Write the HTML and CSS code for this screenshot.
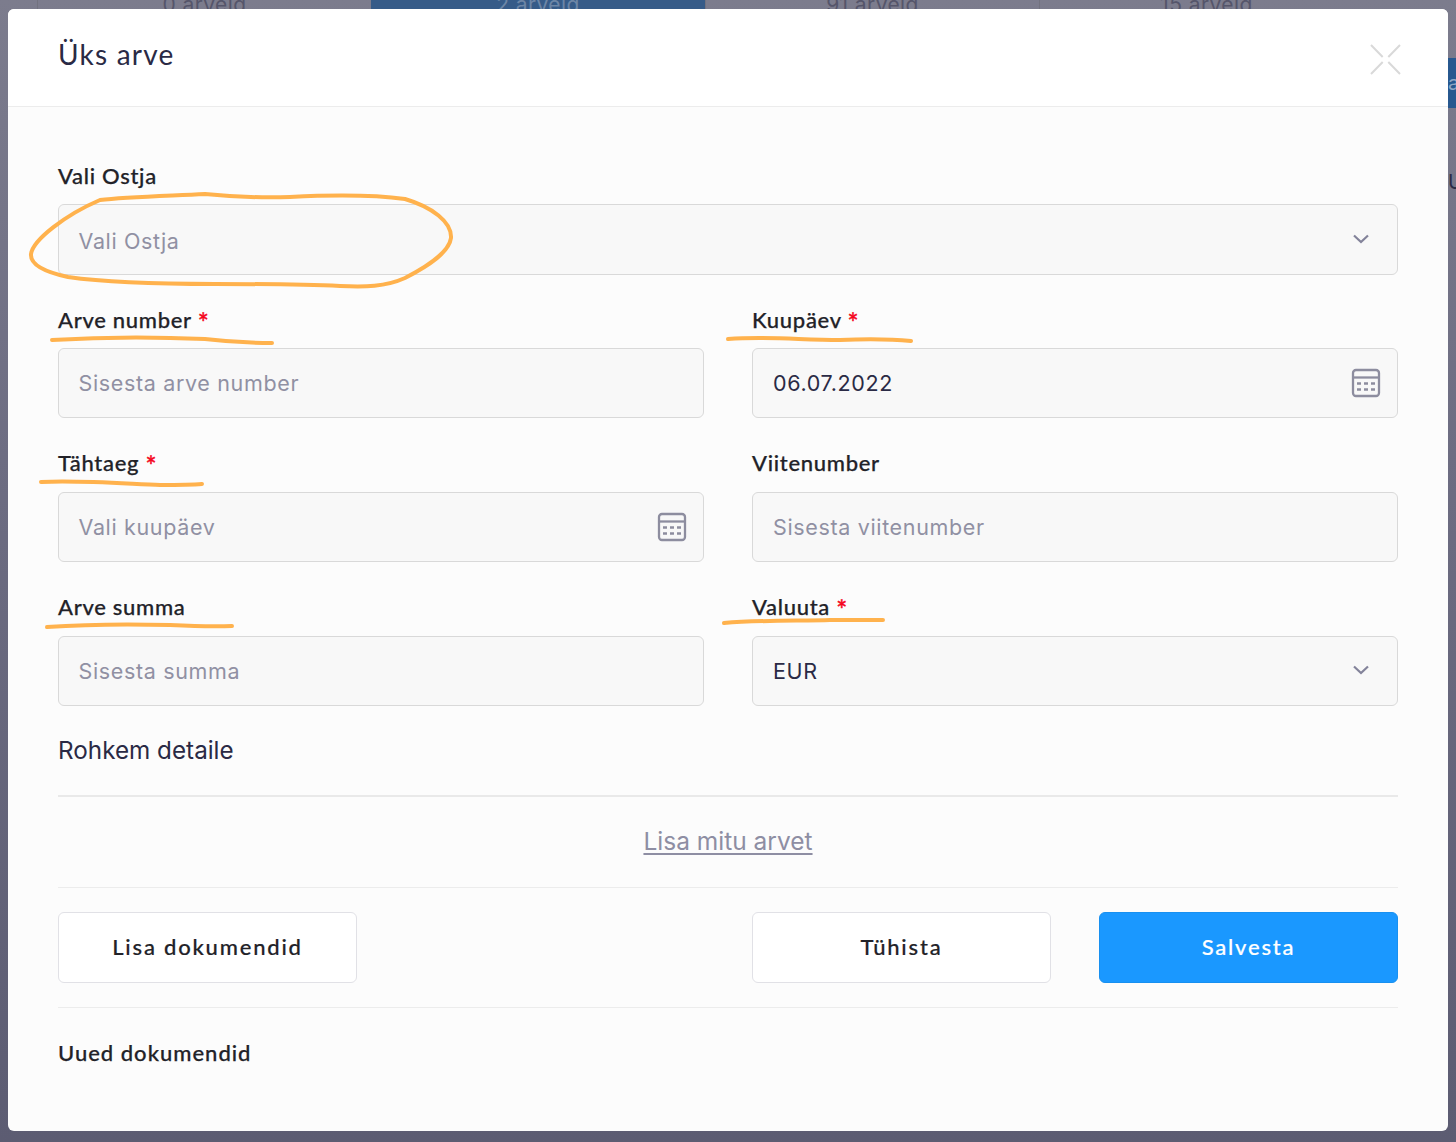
FILE: index.html
```html
<!DOCTYPE html>
<html lang="et">
<head>
<meta charset="utf-8">
<title>Üks arve</title>
<link rel="stylesheet" href="styles.css">
</head>
<body>
<div class="backdrop">
  <div class="bg-tabs">
    <div class="bg-tab bg-t1">0 arveid</div>
    <div class="bg-tab bg-t2">2 arveid</div>
    <div class="bg-tab bg-t3">91 arveid</div>
    <div class="bg-tab bg-t4">15 arveid</div>
  </div>
  <div class="bg-side">a</div>
  <div class="bg-letter">U</div>
</div>
<main class="modal">
  <header class="modal-head">
    <h1 class="modal-title">Üks arve</h1>
    <button class="close" aria-label="Sulge">
      <svg width="32" height="32" viewBox="0 0 32 32" fill="none" stroke="#d9d9d9" stroke-width="2">
        <path d="M2 2 L13.7 14 M31 2 L19.3 14 M2 31 L13.7 19 M31 31 L19.3 19"/>
      </svg>
    </button>
  </header>
  <form class="modal-body">
    <div class="field first">
      <div class="label">Vali Ostja</div>
      <div class="input tall placeholder"><span>Vali Ostja</span>
        <svg class="chev" width="16" height="10" viewBox="0 0 16 10" fill="none" stroke="#83839a" stroke-width="2.2"><path d="M1 1.5 L8 8 L15 1.5"/></svg>
      </div>
    </div>
    <div class="grid">
      <div class="field">
        <div class="label">Arve number <i>*</i></div>
        <div class="input placeholder"><span>Sisesta arve number</span></div>
      </div>
      <div class="field">
        <div class="label">Kuupäev <i>*</i></div>
        <div class="input value"><span>06.07.2022</span>
          <svg class="cal" width="30" height="30" viewBox="0 0 30 30" fill="none" stroke="#8d8d9f" stroke-width="2.3"><rect x="2" y="2" width="26" height="26" rx="3"/><path d="M2 9.5 H28"/><path stroke-width="2.4" d="M6 15.5h4M13 15.5h4M20 15.5h4M6 21.5h4M13 21.5h4M20 21.5h4"/></svg>
        </div>
      </div>
      <div class="field">
        <div class="label">Tähtaeg <i>*</i></div>
        <div class="input placeholder"><span>Vali kuupäev</span>
          <svg class="cal" width="30" height="30" viewBox="0 0 30 30" fill="none" stroke="#8d8d9f" stroke-width="2.3"><rect x="2" y="2" width="26" height="26" rx="3"/><path d="M2 9.5 H28"/><path stroke-width="2.4" d="M6 15.5h4M13 15.5h4M20 15.5h4M6 21.5h4M13 21.5h4M20 21.5h4"/></svg>
        </div>
      </div>
      <div class="field">
        <div class="label">Viitenumber</div>
        <div class="input placeholder"><span>Sisesta viitenumber</span></div>
      </div>
      <div class="field">
        <div class="label">Arve summa</div>
        <div class="input placeholder"><span>Sisesta summa</span></div>
      </div>
      <div class="field">
        <div class="label">Valuuta <i>*</i></div>
        <div class="input value"><span>EUR</span>
          <svg class="chev" width="16" height="10" viewBox="0 0 16 10" fill="none" stroke="#83839a" stroke-width="2.2"><path d="M1 1.5 L8 8 L15 1.5"/></svg>
        </div>
      </div>
    </div>
    <div class="more">Rohkem detaile</div>
    <div class="link-row"><a class="link">Lisa mitu arvet</a></div>
    <div class="actions">
      <button type="button" class="btn">Lisa dokumendid</button>
      <div class="actions-right">
        <button type="button" class="btn">Tühista</button>
        <button type="button" class="btn primary">Salvesta</button>
      </div>
    </div>
    <div class="docs">Uued dokumendid</div>
  </form>
</main>
<svg class="marks" width="1456" height="1142" viewBox="0 0 1456 1142" fill="none" stroke="#ffb24d" stroke-linecap="round" stroke-linejoin="round">
  <path stroke-width="4" d="M100 200 C125 197 165 196 205 194 C235 197 260 198 290 197 C330 195 375 195 405 199 C432 207 452 222 451 238 C449 252 430 265 405 278 C385 287 365 287 340 286 C300 284 260 284 215 284 C165 284 110 283 68 277 C45 272 30 265 31 254 C33 240 65 215 100 200 Z"/>
  <g stroke-width="4">
    <path d="M52 340 C100 337 160 337 205 339 C230 342 250 343 272 343"/>
    <path d="M728 339 C770 336 800 340 840 340 C865 339 890 339 911 341"/>
    <path d="M41 482 C80 480 130 484 160 485 C175 485 190 485 202 484"/>
    <path d="M47 627 C90 624 130 624 170 625 C190 626 210 627 232 626"/>
    <path d="M724 623 C760 620 800 621 830 620 C850 620 865 620 883 620"/>
  </g>
</svg>
</body>
</html>
```

FILE: styles.css
```css
* { box-sizing: border-box; }
html, body { margin: 0; height: 100%; }
body {
  width: 1456px;
  height: 1142px;
  overflow: hidden;
  position: relative;
  font-family: "Inter", "Liberation Sans", sans-serif;
  background: linear-gradient(180deg, #7c7c8d 0%, #6d6d82 40%, #5c5c72 100%);
}
.backdrop { position: absolute; inset: 0; overflow: hidden; }
.bg-tabs { display: flex; height: 9px; margin-left: 37px; color: #55556a; font-size: 21px; }
.bg-tab { display: flex; align-items: center; justify-content: center; height: 9px; overflow: hidden; border-left: 1px solid #72727f; letter-spacing: 0.4px; }
.bg-t1 { width: 334px; }
.bg-t2 { width: 334px; background: #365b88; color: #6d86a6; border: 0; }
.bg-t3 { width: 334px; }
.bg-t4 { width: 334px; }
.bg-side { position: absolute; left: 1448px; top: 58px; width: 8px; height: 50px; background: #27588f; color: #8ea6c4; font-size: 20px; line-height: 50px; overflow: hidden; }
.bg-letter { position: absolute; left: 1448px; top: 170px; width: 8px; overflow: hidden; color: #2a2a45; font-size: 20px; line-height: 24px; }

.modal {
  position: absolute;
  left: 8px;
  top: 9px;
  width: 1440px;
  height: 1122px;
  background: #fcfcfc;
  border-radius: 6px;
  overflow: hidden;
  display: flex;
  flex-direction: column;
}
.modal-head {
  height: 98px;
  flex: none;
  background: #fff;
  border-bottom: 1px solid #ececec;
  padding: 0 47px 0 50px;
  display: flex;
  align-items: center;
  justify-content: space-between;
}
.modal-title { margin: -7px 0 0; font: 400 28px/36px "Lato", sans-serif; letter-spacing: 1.2px; color: #2a2a45; }
.close { padding: 0; margin: 3px 0 0; border: 0; background: none; display: block; width: 32px; height: 32px; }
.close svg { display: block; }

.modal-body { padding: 0 50px; flex: 1; }
.field { display: flex; flex-direction: column; }
.field.first { margin-top: 55px; margin-bottom: 31px; }
.label {
  font: 500 22px/28px "Lato", sans-serif;
  letter-spacing: 0.7px;
  -webkit-text-stroke: 0.25px #222228;
  color: #222228;
  height: 28px;
  margin-bottom: 14px;
  white-space: pre;
}
.grid .field:nth-child(n+3) .label { margin-top: -1px; margin-bottom: 15px; }
.label i { font-style: normal; color: #f5051d; -webkit-text-stroke: 0.4px #f5051d; font-size: 26px; line-height: 20px; margin-left: 0; position: relative; top: 5px; }
.input {
  height: 70px;
  background: #f8f8f8;
  border: 1px solid #d9d9d9;
  border-radius: 6px;
  padding: 0 16px 0 20px;
  display: flex;
  align-items: center;
  justify-content: space-between;
  font-size: 21.5px;
  letter-spacing: 0.65px;
}
.grid .field:nth-child(odd) .input,
.input.tall { padding-left: 19.5px; }
.input.tall { height: 71px; padding-top: 2px; }
.placeholder { color: #9090a3; }
.value { color: #2a2a45; }
.chev { margin-right: 12px; margin-top: -3px; }
.cal { margin-right: 0; }
.grid { display: grid; grid-template-columns: 646px 646px; column-gap: 48px; row-gap: 32px; }
.more {
  font-size: 24.25px;
  line-height: 32px;
  color: #2a2a45;
  margin-top: 29px;
  padding-bottom: 28px;
  border-bottom: 2px solid #e9e9e9;
}
.link-row {
  height: 91px;
  border-bottom: 1px solid #ececec;
  display: flex;
  align-items: center;
  justify-content: center;
  padding-bottom: 2px;
}
.link { font-size: 24.5px; color: #8e8ea3; text-decoration: underline; text-underline-offset: 3px; }
.actions { display: flex; justify-content: space-between; padding: 24px 0; border-bottom: 1px solid #ececec; }
.actions-right { display: flex; gap: 48px; width: 646px; }
.btn {
  width: 299px;
  height: 71px;
  padding: 0 0 2px;
  background: #fff;
  border: 1px solid #e1e1e6;
  border-radius: 6px;
  font: 500 22px "Lato", sans-serif;
  -webkit-text-stroke: 0.2px currentColor;
  letter-spacing: 1.8px;
  color: #222228;
}
.btn.primary { background: #1a98ff; border-color: #1890f0; color: #fff; }
.docs { font: 500 22px/28px "Lato", sans-serif; -webkit-text-stroke: 0.25px #222228; letter-spacing: 1px; color: #222228; margin-top: 31px; }
.marks { position: absolute; left: 0; top: 0; pointer-events: none; }
```
